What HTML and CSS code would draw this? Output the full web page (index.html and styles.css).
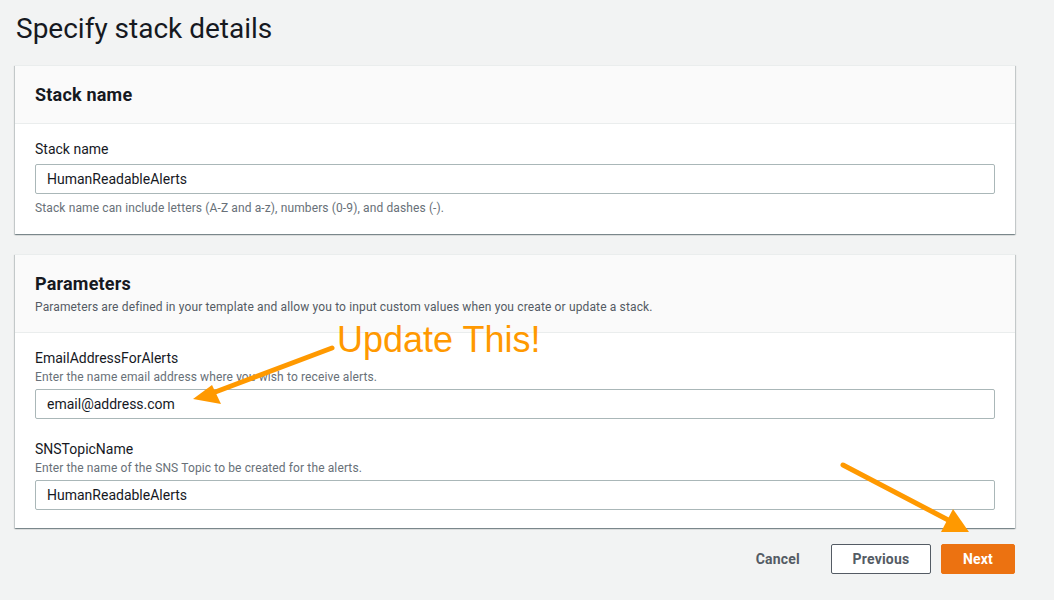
FILE: index.html
```html
<!DOCTYPE html>
<html lang="en">
<head>
<meta charset="utf-8">
<title>Specify stack details</title>
<link rel="stylesheet" href="styles.css">
</head>
<body>
<main class="page">
  <h1 class="page-title">Specify stack details</h1>

  <section class="card">
    <header class="card-header">
      <h2 class="card-title">Stack name</h2>
    </header>
    <div class="card-body">
      <div class="field">
        <label class="field-label">Stack name</label>
        <div class="input">HumanReadableAlerts</div>
        <p class="field-hint">Stack name can include letters (A-Z and a-z), numbers (0-9), and dashes (-).</p>
      </div>
    </div>
  </section>

  <section class="card">
    <header class="card-header">
      <h2 class="card-title">Parameters</h2>
      <p class="card-desc">Parameters are defined in your template and allow you to input custom values when you create or update a stack.</p>
    </header>
    <div class="card-body">
      <div class="field">
        <label class="field-label">EmailAddressForAlerts</label>
        <p class="field-desc">Enter the name email address where you wish to receive alerts.</p>
        <div class="input">email@address.com</div>
      </div>
      <div class="field">
        <label class="field-label">SNSTopicName</label>
        <p class="field-desc">Enter the name of the SNS Topic to be created for the alerts.</p>
        <div class="input">HumanReadableAlerts</div>
      </div>
    </div>
  </section>

  <div class="actions">
    <button class="btn btn-link">Cancel</button>
    <button class="btn btn-normal">Previous</button>
    <button class="btn btn-primary">Next</button>
  </div>
</main>

<div class="annotation-text">Update This!</div>
<svg class="annotations" width="1054" height="600" viewBox="0 0 1054 600">
  <line x1="332" y1="348" x2="210" y2="394" stroke="#ff9900" stroke-width="5" stroke-linecap="round"/>
  <polygon points="193,399 212,385 221,404" fill="#ff9900"/>
  <line x1="843" y1="465" x2="952" y2="522" stroke="#ff9900" stroke-width="5" stroke-linecap="round"/>
  <polygon points="953,509 941,532 969,532" fill="#ff9900"/>
</svg>
</body>
</html>
```

FILE: styles.css
```css
* { box-sizing: border-box; }

html, body {
  margin: 0;
  padding: 0;
  background: #f2f3f3;
  font-family: Roboto, "Noto Sans", sans-serif;
  color: #16191f;
}

.page {
  width: 1000px;
  margin-left: 15px;
  padding-top: 11px;
}

.page-title {
  margin: 0 0 18px 1px;
  font-size: 28px;
  line-height: 36px;
  font-weight: 400;
  color: #16191f;
}

.card {
  background: #fff;
  border-top: 1px solid #eaeded;
  box-shadow: 0 1px 1px 0 rgba(0,28,36,0.3), 1px 1px 1px 0 rgba(0,28,36,0.15), -1px 1px 1px 0 rgba(0,28,36,0.15);
  margin-bottom: 20px;
}

.card-header {
  background: #fafafa;
  border-bottom: 1px solid #eaeded;
  padding: 18px 20px 17px;
}

.card-title {
  margin: 0;
  font-size: 18px;
  line-height: 22px;
  font-weight: 700;
  letter-spacing: 0.2px;
}

.card-desc {
  margin: 4px 0 0;
  font-size: 12px;
  line-height: 16px;
  color: #545b64;
  letter-spacing: 0.14px;
}

.card-body {
  padding: 14px 20px 18px;
  display: flex;
  flex-direction: column;
  gap: 19px;
}

.field {
  display: flex;
  flex-direction: column;
}

.field-label {
  font-size: 14px;
  line-height: 22px;
  color: #16191f;
}

.field-desc {
  margin: 0 0 4px;
  font-size: 12px;
  line-height: 16px;
  color: #687078;
  letter-spacing: 0.12px;
}

.field-label + .input { margin-top: 4px; }

.input {
  height: 30px;
  border: 1px solid #aab7b8;
  border-radius: 2px;
  background: #fff;
  padding: 0 11px;
  font-size: 14px;
  line-height: 28px;
  color: #16191f;
}

.field-hint {
  margin: 6px 0 0;
  font-size: 12px;
  line-height: 16px;
  color: #687078;
  letter-spacing: 0.12px;
}

.actions {
  display: flex;
  justify-content: flex-end;
  align-items: center;
  gap: 10px;
  margin-top: -4px;
}

.btn {
  height: 30px;
  font-family: Roboto, "Noto Sans", sans-serif;
  font-size: 14px;
  font-weight: 700;
  border-radius: 2px;
  padding: 0 20px;
  cursor: pointer;
  letter-spacing: 0.2px;
}

.btn-link {
  background: none;
  border: 1px solid transparent;
  color: #545b64;
}

.btn-normal {
  width: 100px;
  background: #fff;
  border: 1px solid #545b64;
  color: #545b64;
}

.btn-primary {
  width: 74px;
  background: #ec7211;
  border: 1px solid #ec7211;
  color: #fff;
}

.annotation-text {
  position: absolute;
  left: 337px;
  top: 322px;
  font-family: "Liberation Sans", Arial, sans-serif;
  font-size: 36px;
  line-height: 36px;
  color: #ff9900;
  white-space: nowrap;
}

.annotations {
  position: absolute;
  left: 0;
  top: 0;
  pointer-events: none;
}
```
